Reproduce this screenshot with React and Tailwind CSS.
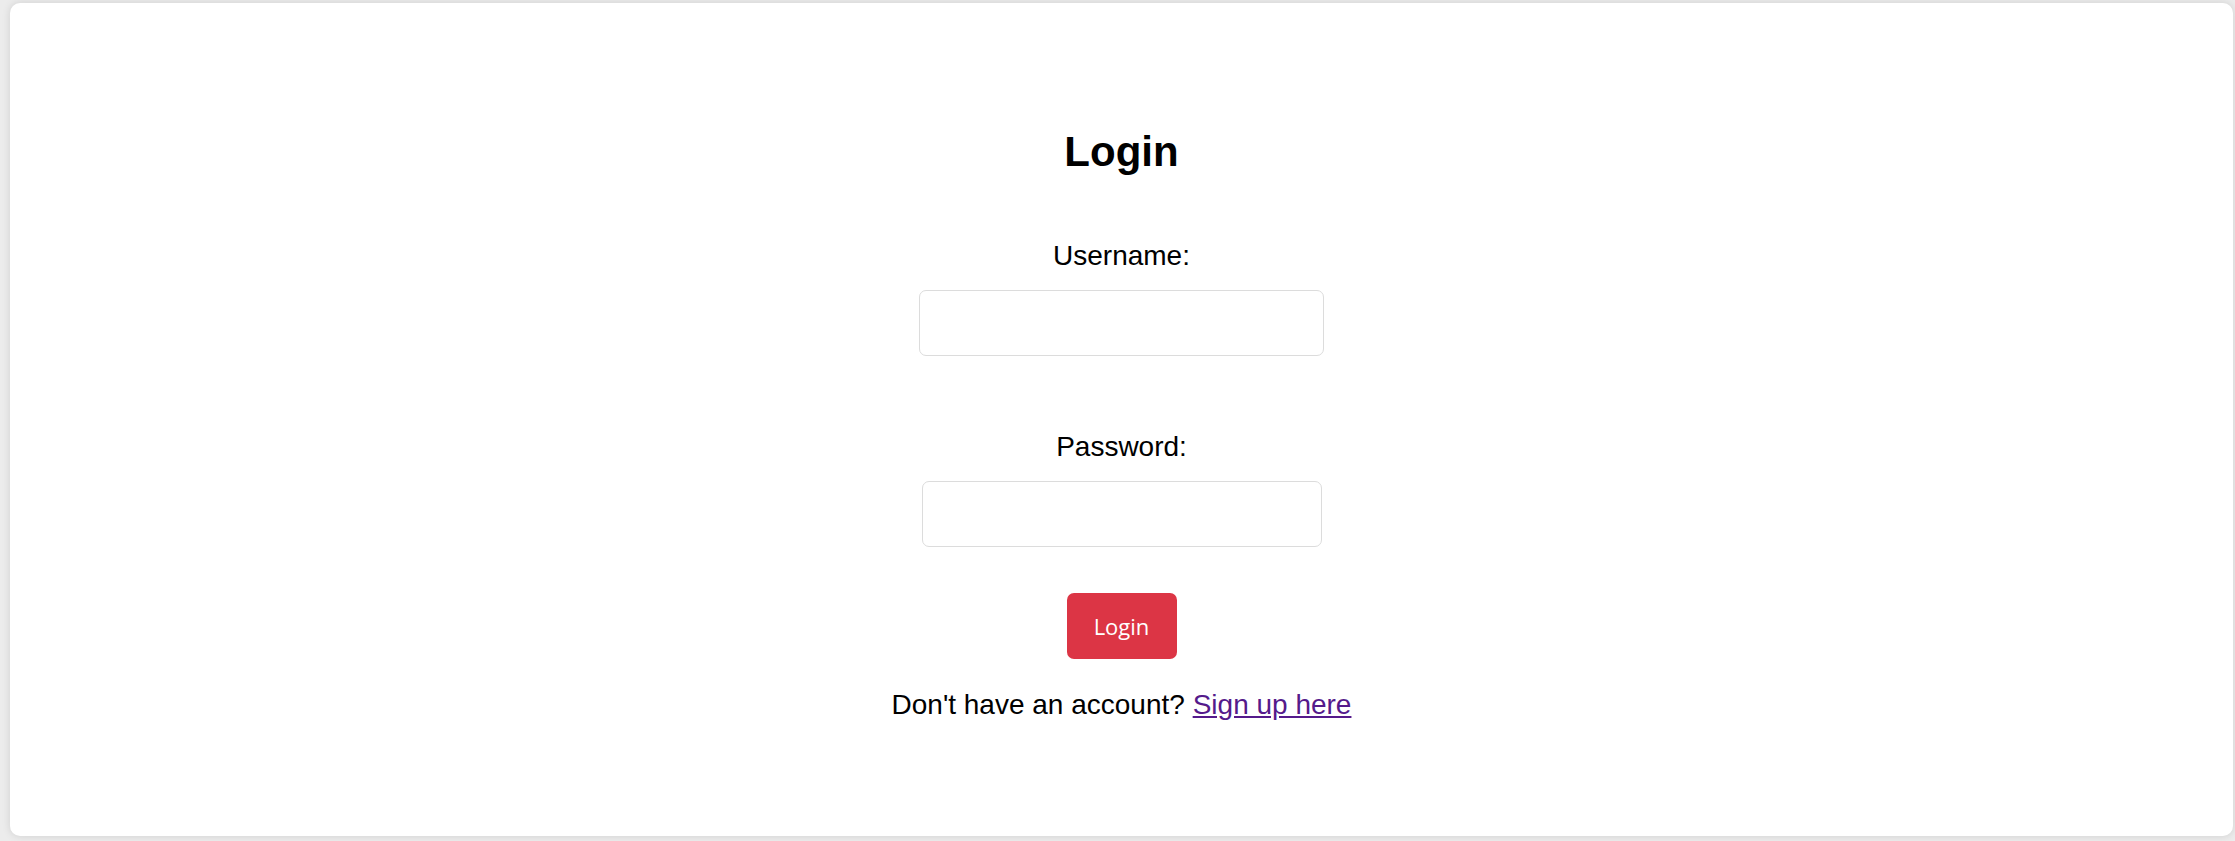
export default function App() {
  return (
    <div className="h-[841px] w-full bg-[#ececec] pl-[10px] pr-[2px] pt-[3px] pb-[5px] font-['Liberation_Sans',Arial,sans-serif] text-black">
      <div className="flex h-full flex-col items-center rounded-[10px] bg-white pt-[125px] shadow-[0_0_8px_rgba(0,0,0,0.12)]">
        <h2 className="text-[42px] font-bold leading-[48px]">Login</h2>

        <form className="flex flex-col items-center" onSubmit={(e) => e.preventDefault()}>
          <label htmlFor="username" className="mt-[64px] text-[28px] leading-[32px]">
            Username:
          </label>
          <input
            id="username"
            type="text"
            className="mt-[18px] h-[66px] w-[405px] rounded-[7px] border border-[#dcdcdc] px-3 text-[24px] outline-none"
          />

          <label htmlFor="password" className="mt-[75px] text-[28px] leading-[32px]">
            Password:
          </label>
          <input
            id="password"
            type="password"
            className="mt-[18px] h-[66px] w-[400px] rounded-[7px] border border-[#dcdcdc] px-3 text-[24px] outline-none"
          />

          <button
            type="submit"
            className="mt-[46px] h-[66px] w-[110px] rounded-[7px] bg-[#dc3545] font-['Open_Sans',sans-serif] text-[22px] text-white"
          >
            Login
          </button>
        </form>

        <p className="mt-[30px] text-[28px] leading-[32px]">
          Don't have an account?{' '}
          <a href="#" className="text-[#551a8b] underline">
            Sign up here
          </a>
        </p>
      </div>
    </div>
  );
}
